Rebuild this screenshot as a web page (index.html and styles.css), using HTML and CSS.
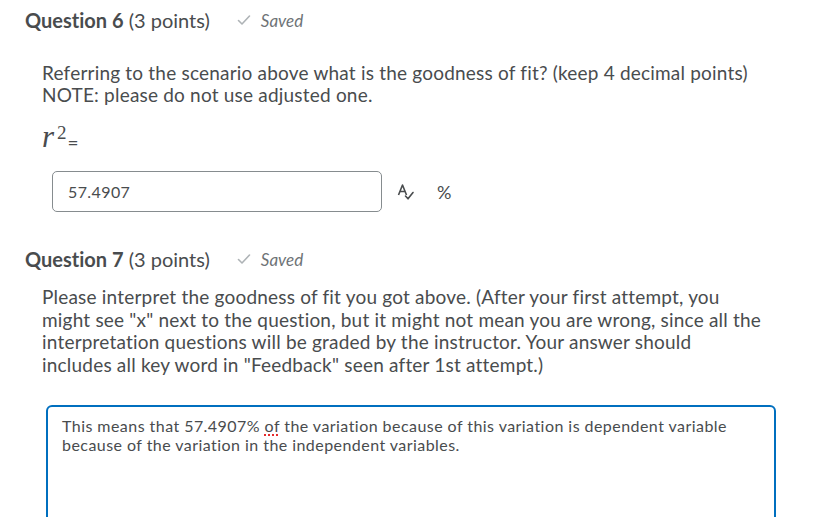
FILE: index.html
```html
<!DOCTYPE html>
<html>
<head>
<meta charset="utf-8">
<link rel="stylesheet" href="styles.css">
</head>
<body>
<div class="page">
  <section class="question q6">
    <div class="qhead">
      <h2 class="qtitle"><strong>Question 6</strong> (3 points)</h2>
      <span class="saved">
        <svg class="check" width="14" height="12" viewBox="0 0 14 12"><path d="M1.5 6.5 L5 10 L12.5 2" fill="none" stroke="#aeb3b6" stroke-width="1.6" stroke-linecap="round" stroke-linejoin="round"/></svg>
        <em>Saved</em>
      </span>
    </div>
    <div class="qbody">
      <p class="prompt">Referring to the scenario above what is the goodness of fit? (keep 4 decimal points)<br>NOTE: please do not use adjusted one.</p>
      <div class="formula"><span class="r">r</span><span class="sq">2</span><span class="eq">=</span></div>
      <div class="answer-row">
        <div class="input">57.4907</div>
        <svg class="spell" width="18" height="18" viewBox="0 0 18 18"><path d="M1.5 12 L5.5 2 L9.5 12 M3 8.5 H8" fill="none" stroke="#494c4e" stroke-width="1.6" stroke-linejoin="round"/><path d="M8.5 13 L11 15.8 L16 9.5" fill="none" stroke="#494c4e" stroke-width="1.6" stroke-linecap="round" stroke-linejoin="round"/></svg>
        <span class="pct">%</span>
      </div>
    </div>
  </section>
  <section class="question q7">
    <div class="qhead">
      <h2 class="qtitle"><strong>Question 7</strong> (3 points)</h2>
      <span class="saved">
        <svg class="check" width="14" height="12" viewBox="0 0 14 12"><path d="M1.5 6.5 L5 10 L12.5 2" fill="none" stroke="#aeb3b6" stroke-width="1.6" stroke-linecap="round" stroke-linejoin="round"/></svg>
        <em>Saved</em>
      </span>
    </div>
    <div class="qbody">
      <p class="prompt p7">Please interpret the goodness of fit you got above. (After your first attempt, you might see "x" next to the question, but it might not mean you are wrong, since all the interpretation questions will be graded by the instructor. Your answer should includes all key word in "Feedback" seen after 1st attempt.)</p>
      <div class="textarea">This means that 57.4907% <span class="misspell">of</span> the variation because of this variation is dependent variable because of the variation in the independent variables.</div>
    </div>
  </section>
</div>
</body>
</html>
```
FILE: styles.css
```css
html, body {
  margin: 0;
  padding: 0;
  background: #ffffff;
}
body {
  font-family: Lato, "Liberation Sans", sans-serif;
  color: #494c4e;
  font-variant-ligatures: none;
}
.page {
  padding: 8px 0 0 25px;
}
.qhead {
  display: flex;
  align-items: center;
  height: 24px;
}
.qtitle {
  margin: 0;
  font-size: 20px;
  font-weight: 400;
  line-height: 24px;
  color: #494c4e;
}
.qtitle strong {
  font-weight: 700;
}
.saved {
  display: flex;
  align-items: center;
  gap: 10px;
  margin-left: 27px;
  font-size: 17px;
  color: #6e7376;
}
.check {
  display: block;
}
.qbody {
  padding-left: 17px;
}
.prompt {
  margin: 0;
  font-size: 19px;
  letter-spacing: 0.2px;
  line-height: 22px;
}
.q6 .prompt {
  margin-top: 30px;
}
.formula {
  margin-top: 14px;
  height: 34px;
  display: flex;
  align-items: flex-start;
  color: #494c4e;
}
.r {
  font-family: "Liberation Serif", "DejaVu Serif", serif;
  font-style: italic;
  font-size: 31px;
  line-height: 34px;
}
.sq {
  font-family: "Liberation Serif", "DejaVu Serif", serif;
  font-size: 19px;
  line-height: 19px;
  margin-left: 3px;
  margin-top: 3px;
}
.eq {
  font-family: Lato, sans-serif;
  font-size: 19px;
  line-height: 19px;
  margin-top: 13px;
  margin-left: 1px;
}
.answer-row {
  margin-top: 17px;
  margin-left: 10px;
  display: flex;
  align-items: center;
}
.input {
  box-sizing: border-box;
  width: 330px;
  height: 41px;
  border: 1px solid #868c8f;
  border-radius: 5px;
  padding: 0 15px;
  display: flex;
  align-items: center;
  font-size: 16px;
  letter-spacing: 0.4px;
  color: #494c4e;
}
.spell {
  margin-left: 15px;
}
.pct {
  margin-left: 22px;
  font-size: 18px;
}
.q7 {
  margin-top: 35px;
}
.p7 {
  margin-top: 15px;
  line-height: 22.7px;
  width: 721px;
}
.textarea {
  box-sizing: border-box;
  margin-top: 28px;
  margin-left: 4px;
  width: 730px;
  height: 130px;
  border: 2px solid #006fbf;
  border-radius: 6px;
  padding: 9px 14px;
  font-size: 16px;
  letter-spacing: 0.45px;
  line-height: 19.5px;
  color: #494c4e;
}
.misspell {
  text-decoration: underline dotted #e52b2b;
  text-underline-offset: 3px;
  text-decoration-thickness: 2px;
}
```
